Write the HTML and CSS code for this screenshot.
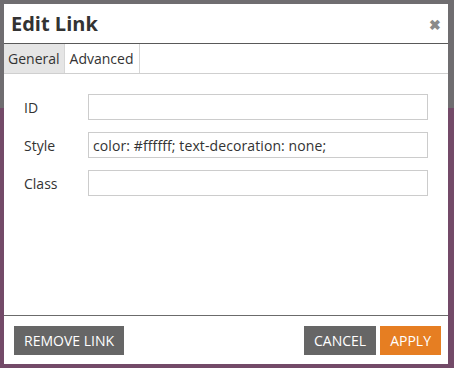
FILE: index.html
```html
<!DOCTYPE html>
<html lang="en">
<head>
    <meta charset="UTF-8">
    <title>Edit Link</title>
    <link rel="stylesheet" href="styles.css">
</head>
<body>
<div class="dialog">
    <div class="dialog-head">
        <span class="dialog-title">Edit Link</span>
        <span class="dialog-close">&#x2716;</span>
    </div>
    <div class="tabs">
        <div class="tab tab-active">General</div>
        <div class="tab">Advanced</div>
    </div>
    <div class="dialog-body">
        <div class="row">
            <label class="row-label">ID</label>
            <input class="row-input" type="text" value="">
        </div>
        <div class="row">
            <label class="row-label">Style</label>
            <input class="row-input" type="text" value="color: #ffffff; text-decoration: none;">
        </div>
        <div class="row">
            <label class="row-label">Class</label>
            <input class="row-input" type="text" value="">
        </div>
    </div>
    <div class="dialog-foot">
        <button class="btn btn-grey">REMOVE LINK</button>
        <div class="btn-group">
            <button class="btn btn-grey">CANCEL</button>
            <button class="btn btn-orange">APPLY</button>
        </div>
    </div>
</div>
</body>
</html>
```

FILE: styles.css
```css
html{
    height: 100%;
}
body{
    height: 100%;
    margin: 0;
    padding: 4px 6px 4px 4px;
    box-sizing: border-box;
    font-family: "Open Sans", "Liberation Sans", sans-serif;
    color: #333;
    background: linear-gradient(#6f6d70 0, #6f6d70 108px, #734a68 108px, #734a68 100%);
}
.dialog{
    display: flex;
    flex-direction: column;
    height: 100%;
    background-color: #fff;
}
.dialog-head{
    display: flex;
    justify-content: space-between;
    align-items: center;
    height: 39px;
    padding: 0 7px;
    border-bottom: 1px solid #595959;
}
.dialog-title{
    font-size: 20px;
    font-weight: 700;
    color: #333;
}
.dialog-close{
    font-size: 14px;
    font-weight: 700;
    color: #8a8a8a;
    margin-right: 0;
    margin-top: 1px;
}
.tabs{
    display: flex;
    height: 29px;
    border-bottom: 1px solid #cfcfcf;
}
.tab{
    display: flex;
    align-items: center;
    padding: 0 6px 0 5px;
    font-size: 14px;
    border-right: 1px solid #d6d6d6;
}
.tab-active{
    padding: 0 4px;
    background-color: #e5e5e5;
}
.dialog-body{
    flex: 1;
    display: flex;
    flex-direction: column;
    gap: 12px;
    padding: 20px 20px 0 20px;
    border-bottom: 1px solid #6b6b6b;
}
.row{
    display: flex;
    align-items: center;
}
.row-label{
    width: 64px;
    font-size: 14px;
}
.row-input{
    width: 340px;
    height: 26px;
    box-sizing: border-box;
    margin: 0;
    padding: 0 4px;
    border: 1px solid #cccccc;
    font-family: "Open Sans", "Liberation Sans", sans-serif;
    font-size: 14px;
    letter-spacing: 0.1px;
    color: #333;
}
.dialog-foot{
    display: flex;
    justify-content: space-between;
    padding: 10px 7px 9px 10px;
}
.btn-group{
    display: flex;
    gap: 4px;
}
.btn{
    height: 29px;
    padding: 0 10px;
    border: none;
    font-family: "Open Sans", "Liberation Sans", sans-serif;
    font-size: 14px;
    color: #fff;
}
.btn-grey{
    background-color: #666666;
}
.btn-orange{
    background-color: #e67e22;
}
```
